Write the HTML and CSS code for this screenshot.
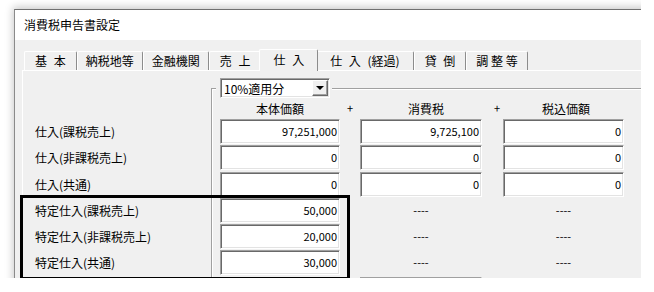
FILE: index.html
```html
<!DOCTYPE html>
<html lang="ja">
<head>
  <meta charset="UTF-8">
  <title>消費税申告書設定</title>
  <link rel="stylesheet" href="styles.css">
</head>
<body>

  <div class="screen">
    <div class="window">
      <div class="titlebar">消費税申告書設定</div>

      <div class="client">
        <div class="tabs">
          <div class="tab">基 本</div>
          <div class="tab plain">納税地等</div>
          <div class="tab plain">金融機関</div>
          <div class="tab">売 上</div>
          <div class="tab active">仕 入</div>
          <div class="tab long">仕 入 (経過)</div>
          <div class="tab">貸 倒</div>
          <div class="tab tight">調 整 等</div>
        </div>

        <div class="panel">
          <div class="labels">
            <div class="label">仕入(課税売上)</div>
            <div class="label">仕入(非課税売上)</div>
            <div class="label">仕入(共通)</div>
            <div class="label">特定仕入(課税売上)</div>
            <div class="label">特定仕入(非課税売上)</div>
            <div class="label">特定仕入(共通)</div>
          </div>

          <div class="group">
            <div class="combo-wrap">
              <div class="combo">
                <span class="combo-text">10%適用分</span>
                <span class="combo-btn"><span class="arrow"></span></span>
              </div>
            </div>

            <div class="grid">
              <div class="head">本体価額</div>
              <div class="plus">+</div>
              <div class="head head-2">消費税</div>
              <div class="plus plus-2">+</div>
              <div class="head head-3">税込価額</div>

              <div class="box">97,251,000</div><div></div>
              <div class="box">9,725,100</div><div></div>
              <div class="box">0</div>

              <div class="box">0</div><div></div>
              <div class="box">0</div><div></div>
              <div class="box">0</div>

              <div class="box">0</div><div></div>
              <div class="box">0</div><div></div>
              <div class="box">0</div>

              <div class="box">50,000</div><div></div>
              <div class="dash">----</div><div></div>
              <div class="dash">----</div>

              <div class="box">20,000</div><div></div>
              <div class="dash">----</div><div></div>
              <div class="dash">----</div>

              <div class="box">30,000</div><div></div>
              <div class="dash">----</div><div></div>
              <div class="dash">----</div>

              <div></div><div></div>
              <div class="box"></div><div></div>
              <div></div>
            </div>
          </div>
        </div>
      </div>
    </div>
  </div>

  <!-- 注目枠 -->
  <div class="callout"></div>

</body>
</html>
```

FILE: styles.css
```css
body {
  margin: 0;
  background-color: #ffffff;
  font-family: "Noto Sans CJK JP", sans-serif;
  font-size: 12px;
  color: #000;
  position: relative;
}
.screen {
  width: 641px;
  height: 278px;
  overflow: hidden;
  padding: 9px 0 0 14px;
  box-sizing: border-box;
}
.window {
  width: 660px;
  height: 300px;
  background-color: #f0f0f0;
  border-top: 1px solid #707070;
  border-left: 1px solid #8a8a8a;
  box-shadow: -1px -2px 8px rgba(0, 0, 0, 0.22);
}
.titlebar {
  height: 30px;
  line-height: 30px;
  padding-left: 9px;
  background-color: #ffffff;
}
.client {
  padding: 9px 0 0 7px;
}
.tabs {
  display: flex;
  align-items: flex-end;
  height: 21px;
  margin-left: 2px;
  position: relative;
  z-index: 1;
}
.tab {
  height: 19px;
  box-sizing: border-box;
  padding: 0 10px;
  line-height: 17px;
  word-spacing: 4px;
  white-space: nowrap;
  border-top: 1px solid #ffffff;
  border-left: 1px solid #ffffff;
  border-right: 1px solid #8c8c8c;
  border-radius: 2px 2px 0 0;
  background-color: #f0f0f0;
}
.tab.plain {
  padding: 0 8px;
}
.tab.long {
  padding: 0 13px;
}
.tab.tight {
  word-spacing: 0;
  padding: 0 9px;
}
.tab.active {
  height: 22px;
  margin: 0 -2px -1px;
  padding: 0 13px;
  line-height: 19px;
  position: relative;
  z-index: 2;
}
.panel {
  display: grid;
  grid-template-columns: 188px 1fr;
  border-top: 1px solid #ffffff;
  border-left: 1px solid #ffffff;
  height: 220px;
}
.labels {
  display: grid;
  grid-auto-rows: 26.3px;
  padding-top: 48px;
  padding-left: 12px;
}
.label {
  line-height: 25px;
  white-space: nowrap;
}
.group {
  margin-top: 17px;
  border-top: 1px solid #a0a0a0;
  border-left: 1px solid #a0a0a0;
  box-shadow: inset 1px 1px 0 #ffffff;
}
.combo-wrap {
  width: fit-content;
  margin: -11px 0 0 4px;
  padding: 0 2px 0 4px;
  background-color: #f0f0f0;
}
.combo {
  display: flex;
  width: 110px;
  height: 20px;
  box-sizing: border-box;
  background-color: #ffffff;
  border-top: 1px solid #a0a0a0;
  border-left: 1px solid #a0a0a0;
  border-right: 1px solid #ffffff;
  border-bottom: 1px solid #ffffff;
  box-shadow: inset 1px 1px 0 #696969, inset -1px -1px 0 #e3e3e3;
  padding: 1px;
}
.combo-text {
  flex: 1;
  padding-left: 2px;
  line-height: 17px;
}
.combo-btn {
  width: 16px;
  box-sizing: border-box;
  display: flex;
  align-items: center;
  justify-content: center;
  background-color: #f0f0f0;
  border-top: 1px solid #ffffff;
  border-left: 1px solid #ffffff;
  border-right: 1px solid #696969;
  border-bottom: 1px solid #696969;
  box-shadow: inset -1px -1px 0 #a0a0a0;
}
.arrow {
  width: 0;
  height: 0;
  border-left: 4px solid transparent;
  border-right: 4px solid transparent;
  border-top: 4px solid #000;
}
.grid {
  display: grid;
  grid-template-columns: 120px 20px 122px 21px 121px;
  grid-template-rows: 21px;
  grid-auto-rows: 26.3px;
  padding-left: 8px;
}
.head {
  text-align: center;
  line-height: 21px;
  white-space: nowrap;
}
.head-2 {
  padding-left: 10px;
}
.head-3 {
  padding-left: 5px;
}
.plus {
  text-align: center;
  line-height: 21px;
  font-size: 11px;
}
.plus-2 {
  padding-left: 9px;
}
.box {
  height: 25px;
  box-sizing: border-box;
  background-color: #ffffff;
  border-top: 1px solid #a0a0a0;
  border-left: 1px solid #a0a0a0;
  border-right: 1px solid #ffffff;
  border-bottom: 1px solid #ffffff;
  box-shadow: inset 1px 1px 0 #696969, inset -1px -1px 0 #e3e3e3;
  padding-right: 2px;
  text-align: right;
  font-size: 11px;
  line-height: 23px;
}
.dash {
  text-align: center;
  font-size: 11px;
  line-height: 25px;
}
.callout {
  position: absolute;
  left: 20px;
  top: 195px;
  width: 330px;
  height: 85px;
  box-sizing: border-box;
  border: 3px solid #000;
}
```
